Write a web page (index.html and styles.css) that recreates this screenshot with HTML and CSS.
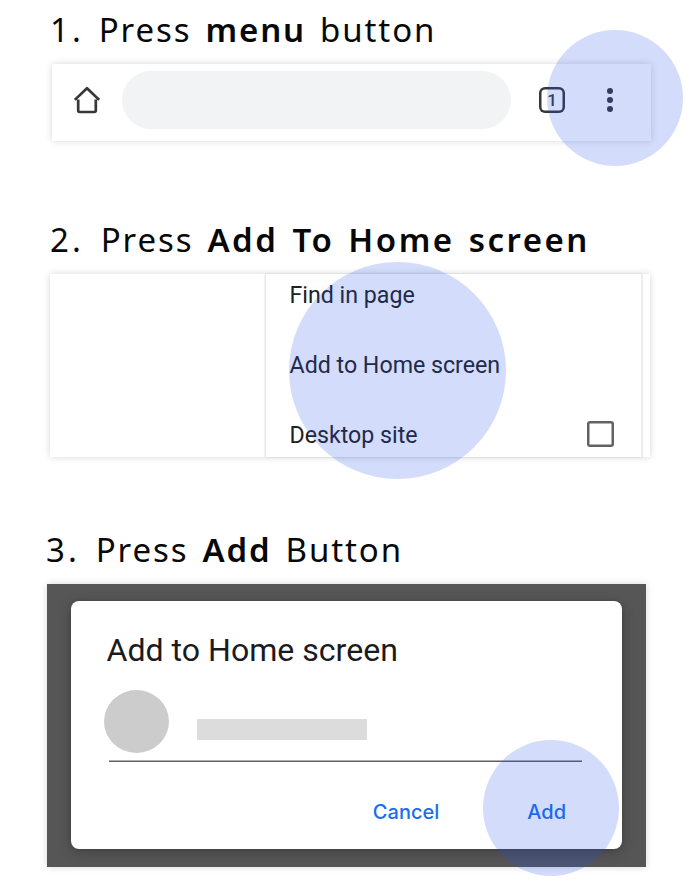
FILE: index.html
```html
<!DOCTYPE html>
<html lang="en">
<head>
<meta charset="utf-8">
<title>Add to Home screen</title>
<link rel="stylesheet" href="styles.css">
</head>
<body>
<main class="guide">
  <section class="step step-menu">
    <h2 class="heading"><span class="number">1.</span> <span>Press</span> <b>menu</b> <span>button</span></h2>
    <div class="panel toolbar">
      <svg class="home" viewBox="0 0 28 28"><path d="M5.200 13.500V24.600Q5.200 26 6.600 26H21.400Q22.800 26 22.800 24.600V13.500M1.800 13.900L14 2.200L26.200 13.900" fill="none" stroke="#34383b" stroke-width="2.700" stroke-linejoin="round"/></svg>
      <div class="address"></div>
      <div class="tabs">1</div>
      <div class="dots"><i></i><i></i><i></i></div>
      <div class="spot spot-menu"></div>
    </div>
  </section>
  <section class="step step-list">
    <h2 class="heading"><span class="number">2.</span> <span>Press</span> <b>Add To Home screen</b></h2>
    <div class="panel page">
      <div class="menu">
        <div class="item">Find in page</div>
        <div class="item">Add to Home screen</div>
        <div class="item">Desktop site<span class="check"></span></div>
      </div>
      <div class="spot spot-list"></div>
    </div>
  </section>
  <section class="step step-add">
    <h2 class="heading"><span class="number">3.</span> <span>Press</span> <b>Add</b> <span>Button</span></h2>
    <div class="panel backdrop">
      <div class="dialog">
        <div class="title">Add to Home screen</div>
        <div class="field"><div class="avatar"></div><div class="name"></div></div>
        <div class="actions"><span>Cancel</span><span>Add</span></div>
      </div>
      <div class="spot spot-add"></div>
    </div>
  </section>
</main>
</body>
</html>
```
FILE: styles.css
```css
* { box-sizing: border-box; }
body { margin: 0; background: #fff; }
.guide { width: 700px; height: 883px; overflow: hidden; }
.step { display: flow-root; }
.step-menu { height: 210px; padding-left: 52px; }
.step-list { height: 310px; padding-left: 50px; }
.step-add { padding-left: 47px; }
.heading {
  margin: 0; height: 64px; padding-top: 7px;
  font: 400 33px/46px "Noto Sans", sans-serif;
  letter-spacing: 1.900px; word-spacing: 3.500px; white-space: nowrap; color: #080808;
}
.heading b { font-weight: 600; }
.number { margin-right: 3px; letter-spacing: 3px; }
.step-menu .number { margin-left: -2px; margin-right: 1px; }
.step-list .number { margin-right: 3px; }
.step-add .number { margin-left: -1px; margin-right: 2px; }
.step-list b { word-spacing: 3px; letter-spacing: 2.500px; }
.panel { position: relative; background: #fff; box-shadow: 0 0 7px rgba(0,0,0,.16); }
.toolbar { width: 599px; height: 77px; display: flex; align-items: center; padding: 0 36px 5px 21px; }
.home { width: 28px; height: 28px; }
.address { width: 389px; height: 58px; margin-left: 21px; border-radius: 29px; background: #f1f3f4; }
.tabs {
  width: 26px; height: 26px; margin-left: 28px; box-shadow: inset 0 0 0 2.500px #34383b; border-radius: 6px;
  font: 500 17px/26px Roboto, sans-serif; text-align: center; color: #34383b;
}
.dots { display: flex; flex-direction: column; gap: 3px; margin-left: 42px; }
.dots i { width: 6px; height: 6px; border-radius: 50%; background: #34383b; }
.spot { position: absolute; border-radius: 50%; background: rgba(40,80,235,.2); }
.spot-menu { width: 136px; height: 136px; left: 495px; top: -34px; }
.page { width: 600px; height: 183px; padding: 0 7px 0 216px; }
.menu { height: 183px; padding: 0 27px 0 23.500px; border-right: 2px solid #eee; box-shadow: -1px 0 2px rgba(0,0,0,.14); }
.item {
  height: 70px; display: flex; align-items: center; justify-content: space-between;
  font: 400 23.200px/28px Roboto, sans-serif; color: #202124;
}
.item:first-child { height: 56px; padding-bottom: 14px; }
.item:last-child { height: 57px; padding-top: 13px; }
.check { width: 27px; height: 26px; margin-top: -3px; box-shadow: inset 0 0 0 2.500px #5f6368; border-radius: 3px; }
.spot-list { width: 217px; height: 217px; left: 239px; top: -12px; }
.backdrop { width: 599px; height: 283px; padding: 17px 24px; background: #565656; }
.dialog { width: 551px; height: 248px; padding: 29px 35px 0 35.500px; border-radius: 8px; background: #fff; box-shadow: 0 4px 14px rgba(0,0,0,.2), 0 0 4px rgba(0,0,0,.15); }
.title { height: 60px; font: 400 32.100px/40px Roboto, sans-serif; color: #1b1b1f; white-space: nowrap; }
.field { width: 473px; height: 72px; margin-left: 2.500px; display: flex; box-shadow: inset 0 -1.500px #606066; }
.avatar { width: 65px; height: 63px; margin-left: -5px; border-radius: 50%; background: #ccc; }
.name { width: 170px; height: 21px; margin: 29px 0 0 28px; background: #dcdcdc; }
.actions { display: flex; justify-content: flex-end; gap: 88px; padding: 35px 21px 0 0; font: 450 20px/30px Inter, sans-serif; color: #176ef2; }
.spot-add { width: 136px; height: 136px; left: 436px; top: 156px; }
```
